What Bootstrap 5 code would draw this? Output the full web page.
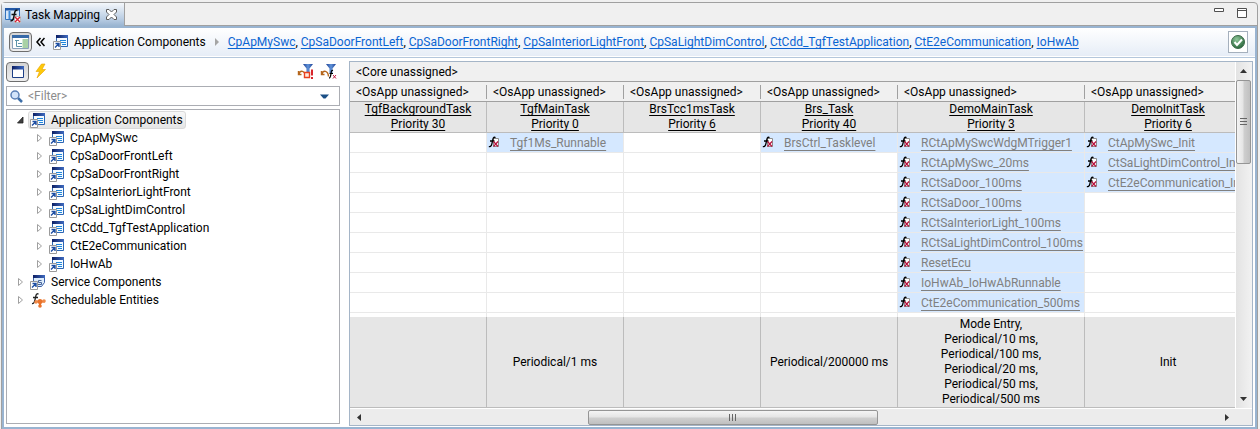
<!DOCTYPE html>
<html lang="en">
<head>
<meta charset="utf-8">
<meta name="viewport" content="width=device-width, initial-scale=1">
<title>Task Mapping</title>
<link href="https://cdn.jsdelivr.net/npm/bootstrap@5.3.0/dist/css/bootstrap.min.css" rel="stylesheet">
<style>
  body { font-family: Roboto, "Open Sans", sans-serif; font-size: 12px; line-height: 16px; color: #000; background: #f0f0f0; padding: 2px 2px 0 1px; }
  button { font: inherit; color: inherit; }
  svg { display: block; flex: none; }
  .view { border: 1px solid #a0a0a0; border-radius: 4px 4px 0 0; }
  .tab-strip { height: 23px; border-bottom: 1px solid #a0a0a0; }
  .view-tab { width: 123px; height: 23px; padding: 0 7px 0 3px; background: linear-gradient(#f4f7fb, #b9cde3 70%, #99b4d1); border-right: 1px solid #a0a0a0; }
  .view-buttons { gap: 13px; padding: 4px 10px 0 0; }
  .frame { border: 2px solid #99b4d1; background: #fff; }
  .plain { border: 0; background: none; padding: 0; }
  .crumbs { height: 28px; background: linear-gradient(#fff, #e6edf7); padding: 0 7px 0 5px; }
  .crumb-title { margin-left: 5px; }
  .crumb-rule { border-top: 1px solid #fff; border-bottom: 1px solid #b4c7dc; height: 2px; }
  .crumb-links a { color: #0a64d2; text-underline-offset: 2px; text-decoration-skip-ink: none; }
  .toggle { width: 23px; height: 20px; border: 1px solid #6e6e6e; border-radius: 4px; background: linear-gradient(#d5d5d5, #eee); padding: 0; }
  .check-btn { width: 20px; height: 22px; border: 1px solid #a5b0bd; background: #fff; padding: 0; }
  .side { flex: 0 0 345px; padding: 4px 9px 3px 2px; }
  .tools { height: 24px; padding-right: 3px; gap: 6px; }
  .filter { height: 20px; border: 1px solid #abadb3; margin-bottom: 3px; padding: 0 10px 0 3px; }
  .filter input { border: 0; outline: 0; padding: 0; min-width: 0; color: #000; }
  .filter input::placeholder { color: #8c8c8c; opacity: 1; }
  .tree { border: 1px solid #abadb3; padding-top: 1px; }
  .tree ul { padding-left: 19px; }
  .node { height: 18px; padding-left: 10px; }
  .node > svg:first-child { margin-right: 4px; }
  .node-label { display: flex; align-items: center; gap: 5px; padding: 0 2px 0 1px; height: 18px; border: 1px solid transparent; border-radius: 3px; }
  .node-label.active { border-color: #d9d9d9; background: linear-gradient(#f8f8f8, #e5e5e5); }
  .map { margin: 3px 2px 1px 0; border: 1px solid #a5b5c7; background: #f0f0f0; }
  .task-grid { table-layout: fixed; width: 902px; border-collapse: separate; border-spacing: 0; }
  .task-grid th, .task-grid td { padding: 0; font-weight: 400; white-space: nowrap; }
  .task-grid .core { height: 20px; border-bottom: 1px solid #a0a0a0; padding-left: 6px; }
  .task-grid .osapp { height: 20px; border-bottom: 1px solid #a0a0a0; padding: 3px 0 2px; line-height: 14px; }
  .osapp span { display: block; padding-left: 6px; border-right: 1px solid #a0a0a0; }
  .task-grid .task { height: 31px; line-height: 15px; text-align: center; background: #e6e6e6; border-right: 1px solid #bcbcbc; border-bottom: 1px solid #bcbcbc; text-decoration: underline; text-underline-offset: 2px; text-decoration-skip-ink: none; }
  .task-grid .run { height: 20px; background: #fff; border-right: 1px solid #e9e9e9; border-bottom: 1px solid #e9e9e9; }
  .task-grid .filled { background: #d5e8ff; }
  .run a { display: flex; gap: 10px; height: 19px; color: #808080; text-decoration: none; padding-left: 1px; align-items: center; }
  .run a span { text-decoration: underline; text-underline-offset: 3px; text-decoration-skip-ink: none; }
  .task-grid .spare { height: 4px; background: #fff; border-right: 1px solid #e9e9e9; }
  .task-grid .trigger { height: 91px; line-height: 15px; text-align: center; vertical-align: middle; background: #e6e6e6; border-right: 1px solid #bcbcbc; border-bottom: 1px solid #bcbcbc; }
  .vbar { flex: 0 0 17px; padding: 0 1px 0 0; background: linear-gradient(90deg, #e3e3e3, #f2f2f2); border-left: 1px solid #fff; }
  .vthumb { height: 84px; border: 1px solid #959595; border-radius: 2px; background: linear-gradient(90deg, #f4f4f4 0, #e4e4e4 48%, #cfcfcf 52%, #c0c0c0); }
  .hbar { height: 17px; background: #ececec; border-top: 1px solid #fff; padding: 1px 17px 0 0; }
  .htrack { padding-left: 25%; }
  .hthumb { width: 46%; height: 15px; border: 1px solid #959595; border-radius: 2px; background: linear-gradient(#f4f4f4 0, #e4e4e4 48%, #cfcfcf 52%, #c0c0c0); }
  .arrow-v { height: 18px; }
  .arrow-h { width: 17px; height: 15px; }
</style>
</head>
<body class="min-vh-100 d-flex flex-column">

<svg width="0" height="0" class="position-absolute" aria-hidden="true">
  <defs>
    <linearGradient id="navy" x1="0" x2="1"><stop offset="0" stop-color="#0c1e63"/><stop offset="1" stop-color="#3f6bc0"/></linearGradient>
    <linearGradient id="funnel" x1="0" x2="1"><stop offset="0" stop-color="#1c3f94"/><stop offset=".5" stop-color="#5f92d8"/><stop offset="1" stop-color="#1c3f94"/></linearGradient>
    <radialGradient id="green" cx=".4" cy=".3" r=".8"><stop offset="0" stop-color="#8fc79a"/><stop offset="1" stop-color="#1d5b30"/></radialGradient>
    <symbol id="shortcut" viewBox="0 0 16 16">
      <path d="M.5 7.500h7v8h-7z" fill="#fff" stroke="#9a9a9a"/>
      <path d="M2 13.500l3.500-3.500M2.500 9.500H6V13" fill="none" stroke="#1e4fa3" stroke-width="1.400"/>
    </symbol>
    <symbol id="component" viewBox="0 0 16 16">
      <path d="M3.500 1.500h11v11h-11z" fill="#f4faff" stroke="#2d66b4"/>
      <path d="M3 1h12v3H3z" fill="url(#navy)"/>
      <path d="M7 6.500h6M7 8.500h6M9 10.500h4" stroke="#1f86dc"/>
      <use href="#shortcut"/>
    </symbol>
    <symbol id="service" viewBox="0 0 16 16">
      <path d="M3.500 1.500h11v7l-3 4h-8z" fill="#dcecfb" stroke="#3a5ea8"/>
      <path d="M3 1h12v3H3z" fill="url(#navy)"/>
      <path d="M11.500 6.500H8.500v2h3v2H8" fill="none" stroke="#49659a"/>
      <use href="#shortcut"/>
    </symbol>
    <symbol id="entity" viewBox="0 0 16 16">
      <path d="M8.500 2.200C6.500.8 6 3 5.500 5.500S4.500 12 2 11.500M3 5.500h5" fill="none" stroke="#222" stroke-width="1.300"/>
      <path d="M5 9.500h10M10 9v5" stroke="#e9732c" stroke-width="2"/>
      <circle cx="10" cy="9.500" r="2.500" fill="#e9732c"/><circle cx="14" cy="9" r="1.800" fill="#f08a48"/><circle cx="6" cy="10" r="1.800" fill="#f08a48"/><circle cx="10" cy="14" r="1.800" fill="#e9732c"/>
    </symbol>
    <symbol id="runnable" viewBox="0 0 12 14">
      <path d="M5.500 2.500h5v8h-5z" fill="#fff" stroke="#8d8d8d"/>
      <path d="M7.500 1.600C5.500.4 5 2.500 4.500 5S3.500 11.500.8 10.500M2 5h4.500" fill="none" stroke="#000" stroke-width="1.300"/>
      <path d="M5.500 5.500l4.500 5M10 5.500l-4.500 5" stroke="#b5103c" stroke-width="1.200"/>
    </symbol>
    <symbol id="closed" viewBox="0 0 7 10"><path d="M1.500 1.500v7l4-3.500z" fill="#fff" stroke="#a0a0a0"/></symbol>
    <symbol id="opened" viewBox="0 0 7 10"><path d="M6 2v6H.5z" fill="#404040" stroke="#222" stroke-width=".8"/></symbol>
  </defs>
</svg>

<main class="view flex-grow-1 d-flex flex-column">
  <div class="tab-strip d-flex justify-content-between">
    <div class="view-tab d-flex align-items-center gap-1" role="tab">
      <svg width="16" height="16" viewBox="0 0 16 16">
        <path d="M.5 1.500h14v11H.5z" fill="#d5e6f8" stroke="#3273bd"/><path d="M0 1h15v2.500H0z" fill="#2157a5"/><path d="M4.500 4v8" stroke="#3e8ad8" stroke-width="2"/>
        <path d="M9.500 9.500h6v6h-6z" fill="#fff" stroke="#bbb"/>
        <path d="M12.500 3.500C10 2.500 9.700 5 9.200 8S8 14.500 5.500 13.500M6.500 7.500h5" fill="none" stroke="#111" stroke-width="1.500"/>
        <path d="M10 10l5 5M15 10l-5 5" stroke="#d81f33" stroke-width="1.400"/>
      </svg>
      <span class="text-nowrap me-auto">Task Mapping</span>
      <button class="plain" aria-label="Close">
        <svg width="11" height="11" viewBox="0 0 11 11"><path d="M.5.5h2.500l2.500 2.500L8 .5h2.500V3L8 5.500 10.500 8v2.500H8L5.500 8 3 10.500H.5V8L3 5.500.5 3z" fill="#fff" stroke="#5c5c5c"/></svg>
      </button>
    </div>
    <div class="view-buttons d-flex">
      <button class="plain d-flex" aria-label="Minimize"><svg width="10" height="12" viewBox="0 0 10 12"><path d="M.5 1.500h9v3h-9z" fill="#fff" stroke="#505050"/></svg></button>
      <button class="plain d-flex" aria-label="Maximize"><svg width="10" height="12" viewBox="0 0 10 12"><path d="M.5 1.500h9v9h-9zM.5 3.500h9" fill="#fff" stroke="#505050"/></svg></button>
    </div>
  </div>

  <div class="frame flex-grow-1 d-flex flex-column">
    <nav class="crumbs d-flex align-items-center" aria-label="Breadcrumb">
      <button class="toggle d-flex align-items-center justify-content-center" aria-label="Show tree">
        <svg width="17" height="14" viewBox="0 0 17 14"><path d="M.5.5h16v13H.5z" fill="#fff" stroke="#8aa0b8"/><path d="M0 0h17v3H0z" fill="#376aa8"/><path d="M3 5.500h4M6 8.500h4M6 11.500h4M4.500 6v5.500H6" fill="none" stroke="#5d94a8"/><path d="M10.500 4h5.500v9h-5.500z" fill="#a9d1a5"/></svg>
      </button>
      <button class="plain ms-1 me-2" aria-label="Back"><svg width="9" height="10" viewBox="0 0 9 10"><path d="M4.500 1L1 5l3.500 4M8.500 1L5 5l3.500 4" fill="none" stroke="#000" stroke-width="1.500"/></svg></button>
      <svg width="16" height="16"><use href="#component"/></svg>
      <span class="crumb-title text-nowrap">Application Components</span>
      <svg class="mx-2" width="6" height="8" viewBox="0 0 6 8"><path d="M1 0v8l4-4z" fill="#a5a5a5"/></svg>
      <span class="crumb-links text-nowrap me-auto"><a href="#">CpApMySwc</a>, <a href="#">CpSaDoorFrontLeft</a>, <a href="#">CpSaDoorFrontRight</a>, <a href="#">CpSaInteriorLightFront</a>, <a href="#">CpSaLightDimControl</a>, <a href="#">CtCdd_TgfTestApplication</a>, <a href="#">CtE2eCommunication</a>, <a href="#">IoHwAb</a></span>
      <button class="check-btn d-flex align-items-center justify-content-center" aria-label="Validate">
        <svg width="14" height="14" viewBox="0 0 14 14"><circle cx="7" cy="7" r="6.500" fill="url(#green)" stroke="#3c6a49"/><path d="M3.500 7l2.500 3 5-5.500" fill="none" stroke="#fff" stroke-width="2"/></svg>
      </button>
    </nav>
    <div class="crumb-rule"></div>

    <div class="d-flex flex-grow-1">
      <aside class="side d-flex flex-column">
        <div class="tools d-flex align-items-start">
          <button class="toggle d-flex align-items-center justify-content-center" aria-label="Window mode"><svg width="12" height="12" viewBox="0 0 12 12"><path d="M.5.500h11v11H.5z" fill="#fff" stroke="#1d3f86"/><path d="M0 0h12v3.500H0z" fill="url(#navy)"/></svg></button>
          <button class="plain me-auto" aria-label="Quick action"><svg width="12" height="18" viewBox="0 0 12 18"><path d="M6.500 2L1 9.500h3.500L2 16 10.500 7.500H7L10 2z" fill="#fdc90a" stroke="#e9a200" stroke-width=".6"/></svg></button>
          <button class="plain" aria-label="Filter unmapped"><svg width="17" height="18" viewBox="0 0 17 18"><path d="M6 2h10l-3.500 4.500V11h-3V6.500z" fill="url(#funnel)"/><path d="M1.500 9v3.500h3M2 12c1-4 6-4 6.500 2.500" fill="none" stroke="#b5661c" stroke-width="1.400"/><path d="M7.500 10.500h5v5h-5z" fill="#ffe9dc" stroke="#e8401f" stroke-width="1.400"/><path d="M15 7.500v6M15 15v2" stroke="#d8262c" stroke-width="2"/></svg></button>
          <button class="plain" aria-label="Filter functions"><svg width="17" height="18" viewBox="0 0 17 18"><path d="M6 2h10l-3.500 4.500V11h-3V6.500z" fill="url(#funnel)"/><path d="M1.500 9v3.500h3M2 12c1-4 6-4 6.500 2.500" fill="none" stroke="#b5661c" stroke-width="1.400"/><path d="M13 8.500c-1.500-.5-1.700 1-2 3s-.5 4.500-2 4.500M9.500 11.500h3.500" fill="none" stroke="#000" stroke-width="1.200"/><path d="M13 13l3 3.500M16 13l-3 3.500" stroke="#c01840"/></svg></button>
        </div>
        <div class="filter d-flex align-items-center">
          <label for="filter" class="me-1" aria-label="Filter"><svg width="14" height="13" viewBox="0 0 14 13"><path d="M8 8l4 4" stroke="#3d6ea8" stroke-width="2.500"/><circle cx="5" cy="5" r="4" fill="#d3e4fa" stroke="#5b7fb5" stroke-width="1.500"/></svg></label>
          <input id="filter" type="text" class="flex-grow-1" placeholder="&lt;Filter&gt;">
          <button class="plain" aria-label="Filter history"><svg width="9" height="5" viewBox="0 0 9 5"><path d="M0 .5h9L5.500 4.500h-2z" fill="#1b4f86"/></svg></button>
        </div>
        <div class="tree flex-grow-1" id="tree"></div>
      </aside>

      <section class="map flex-grow-1 d-flex flex-column overflow-hidden">
        <div class="d-flex flex-grow-1 overflow-hidden">
          <div class="flex-grow-1 overflow-hidden" style="width: 0">
            <table class="task-grid" id="grid">
              <colgroup><col width="137"><col width="137"><col width="137"><col width="137"><col width="187"><col width="167"></colgroup>
            </table>
          </div>
          <div class="vbar d-flex flex-column">
            <button class="plain arrow-v d-flex align-items-center justify-content-center" aria-label="Scroll up"><svg width="7" height="4" viewBox="0 0 7 4"><path d="M0 4h7L3.500 0z" fill="#333"/></svg></button>
            <div class="vthumb d-flex align-items-center justify-content-center mb-auto"><svg width="7" height="8" viewBox="0 0 7 8"><path d="M0 .5h7M0 3.500h7M0 6.500h7" stroke="#666"/></svg></div>
            <button class="plain arrow-v d-flex align-items-center justify-content-center" aria-label="Scroll down"><svg width="7" height="4" viewBox="0 0 7 4"><path d="M0 0h7L3.500 4z" fill="#333"/></svg></button>
          </div>
        </div>
        <div class="hbar d-flex">
          <button class="plain arrow-h d-flex align-items-center justify-content-center" aria-label="Scroll left"><svg width="4" height="7" viewBox="0 0 4 7"><path d="M4 0v7L0 3.500z" fill="#333"/></svg></button>
          <div class="htrack flex-grow-1"><div class="hthumb d-flex align-items-center justify-content-center"><svg width="8" height="7" viewBox="0 0 8 7"><path d="M.5 0v7M3.500 0v7M6.500 0v7" stroke="#666"/></svg></div></div>
          <button class="plain arrow-h d-flex align-items-center justify-content-center" aria-label="Scroll right"><svg width="4" height="7" viewBox="0 0 4 7"><path d="M0 0v7l4-3.500z" fill="#333"/></svg></button>
        </div>
      </section>
    </div>
  </div>
</main>

<script>
  const tree = [
    { name: "Application Components", icon: "component", active: true, items: ["CpApMySwc", "CpSaDoorFrontLeft", "CpSaDoorFrontRight", "CpSaInteriorLightFront", "CpSaLightDimControl", "CtCdd_TgfTestApplication", "CtE2eCommunication", "IoHwAb"] },
    { name: "Service Components", icon: "service" },
    { name: "Schedulable Entities", icon: "entity" }
  ];
  const node = n => `<li><div class="node d-flex align-items-center"><svg width="7" height="10"><use href="#${n.items ? "opened" : "closed"}"/></svg><span class="node-label${n.active ? " active" : ""}"><svg width="16" height="16"><use href="#${n.icon}"/></svg>${n.name}</span></div>${n.items ? `<ul class="list-unstyled m-0">${n.items.map(name => node({ name, icon: "component" })).join("")}</ul>` : ""}</li>`;
  const list = document.createElement("ul");
  list.className = "list-unstyled m-0 p-0";
  list.innerHTML = tree.map(node).join("");
  document.getElementById("tree").append(list);

  const tasks = [
    { name: "TgfBackgroundTask", priority: 30, runs: [], trigger: [] },
    { name: "TgfMainTask", priority: 0, runs: ["Tgf1Ms_Runnable"], trigger: ["Periodical/1 ms"] },
    { name: "BrsTcc1msTask", priority: 6, runs: [], trigger: [] },
    { name: "Brs_Task", priority: 40, runs: ["BrsCtrl_Tasklevel"], trigger: ["Periodical/200000 ms"] },
    { name: "DemoMainTask", priority: 3, runs: ["RCtApMySwcWdgMTrigger1", "RCtApMySwc_20ms", "RCtSaDoor_100ms", "RCtSaDoor_100ms", "RCtSaInteriorLight_100ms", "RCtSaLightDimControl_100ms", "ResetEcu", "IoHwAb_IoHwAbRunnable", "CtE2eCommunication_500ms"], trigger: ["Mode Entry", "Periodical/10 ms", "Periodical/100 ms", "Periodical/20 ms", "Periodical/50 ms", "Periodical/500 ms"] },
    { name: "DemoInitTask", priority: 6, runs: ["CtApMySwc_Init", "CtSaLightDimControl_Init", "CtE2eCommunication_Init"], trigger: ["Init"] }
  ];
  const row = cell => `<tr>${tasks.map(cell).join("")}</tr>`;
  const runRow = i => row(t => t.runs[i]
    ? `<td class="run filled"><a href="#"><svg width="12" height="14"><use href="#runnable"/></svg><span>${t.runs[i]}</span></a></td>`
    : `<td class="run"></td>`);
  document.getElementById("grid").insertAdjacentHTML("beforeend",
    `<thead><tr><th class="core" colspan="6">&lt;Core unassigned&gt;</th></tr>
     ${row(() => `<th class="osapp"><span>&lt;OsApp unassigned&gt;</span></th>`)}
     ${row(t => `<th class="task">${t.name}<br>Priority ${t.priority}</th>`)}</thead>
     <tbody>${Array.from({ length: 9 }, (_, i) => runRow(i)).join("")}${row(() => `<td class="spare"></td>`)}</tbody>
     <tfoot>${row(t => `<td class="trigger">${t.trigger.join(",<br>")}</td>`)}</tfoot>`);
</script>
<script src="https://cdn.jsdelivr.net/npm/bootstrap@5.3.0/dist/js/bootstrap.bundle.min.js"></script>
</body>
</html>
